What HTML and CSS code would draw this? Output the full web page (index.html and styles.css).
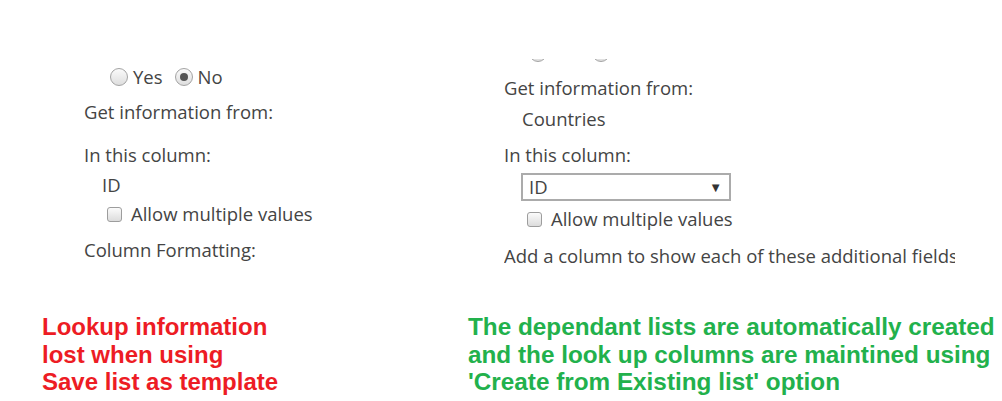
FILE: index.html
```html
<!DOCTYPE html>
<html lang="en">

<head>
    <meta charset="UTF-8">
    <title>Lookup columns</title>
    <link rel="stylesheet" href="styles.css">
</head>

<body>
    <div class="shots">
        <div class="panel panel-left">
            <div class="radios">
                <label class="choice"><span class="radio"></span>Yes</label>
                <label class="choice"><span class="radio checked"></span>No</label>
            </div>
            <div class="label get-info">Get information from:</div>
            <div class="label in-column">In this column:</div>
            <div class="value id-value">ID</div>
            <label class="check-row left-check"><span class="checkbox"></span>Allow multiple values</label>
            <div class="label formatting">Column Formatting:</div>
        </div>

        <div class="panel panel-right">
            <!-- only the bottom edge of the radio buttons shows above the crop -->
            <div class="radio-clip">
                <span class="radio"></span>
                <span class="radio checked"></span>
            </div>
            <div class="label get-info">Get information from:</div>
            <div class="value countries">Countries</div>
            <div class="label in-column">In this column:</div>
            <div class="select">
                <span>ID</span>
                <span class="arrow">&#9660;</span>
            </div>
            <label class="check-row right-check"><span class="checkbox"></span>Allow multiple values</label>
            <div class="label add-column">Add a column to show each of these additional fields</div>
        </div>
    </div>

    <div class="notes">
        <div class="note note-red">
            Lookup information<br>
            lost when using<br>
            Save list as template
        </div>
        <div class="note note-green">
            The dependant lists are automatically created<br>
            and the look up columns are maintined using<br>
            'Create from Existing list' option
        </div>
    </div>
</body>

</html>
```

FILE: styles.css
```css
body {
    margin: 0;
    background: #fff;
    font-family: "Open Sans", "Noto Sans", sans-serif;
    color: #444;
}

.shots {
    display: flex;
    height: 313px;
}

.panel {
    font-size: 18.5px;
    line-height: 24px;
    white-space: nowrap;
}

.panel-left {
    width: 504px;
    padding-left: 84px;
    padding-top: 65px;
    box-sizing: border-box;
}

.panel-right {
    width: 451px;
    padding-top: 59px;
    overflow: hidden;
}

.radios {
    display: flex;
    gap: 12px;
    padding-left: 26px;
}

.choice {
    display: flex;
    align-items: center;
    gap: 5px;
}

.radio {
    flex: none;
    width: 16px;
    height: 16px;
    border: 1px solid #a3a3a3;
    border-radius: 50%;
    background: linear-gradient(#fafafa, #dedede);
    display: flex;
    align-items: center;
    justify-content: center;
}

.radio.checked::after {
    content: "";
    width: 8px;
    height: 8px;
    border-radius: 50%;
    background: #555;
}

.radio-clip {
    height: 3px;
    overflow: hidden;
    display: flex;
    align-items: flex-end;
    gap: 45px;
    padding-left: 25px;
}

.value {
    padding-left: 18px;
}

.panel-left .get-info { margin-top: 11px; }
.panel-left .in-column { margin-top: 19px; }
.panel-left .id-value { margin-top: 6px; }
.panel-left .formatting { margin-top: 12px; }

.panel-right .get-info { margin-top: 14px; }
.panel-right .countries { margin-top: 7px; }
.panel-right .in-column { margin-top: 12px; }
.panel-right .add-column { margin-top: 13px; }

.check-row {
    display: flex;
    align-items: center;
    gap: 9px;
    margin-top: 5px;
}

.left-check { padding-left: 23px; }
.right-check { padding-left: 23px; margin-top: 6px; }

.checkbox {
    width: 13px;
    height: 13px;
    border: 1px solid #9d9d9d;
    border-radius: 3px;
    background: linear-gradient(#fbfbfb, #dcdcdc);
}

.select {
    margin-top: 6px;
    margin-left: 17px;
    width: 210px;
    height: 28px;
    box-sizing: border-box;
    border: 2px solid #ababab;
    display: flex;
    align-items: center;
    justify-content: space-between;
    padding: 0 7px 0 6px;
}

.arrow {
    font-size: 13px;
    color: #333;
}

.notes {
    display: flex;
    font-family: "Liberation Sans", Arial, sans-serif;
    font-weight: bold;
    font-size: 24px;
    line-height: 27.5px;
}

.note-red {
    width: 426px;
    padding-left: 42px;
    color: #ed1c24;
}

.note-green {
    font-size: 24.3px;
    color: #22b14c;
    white-space: nowrap;
}
```
